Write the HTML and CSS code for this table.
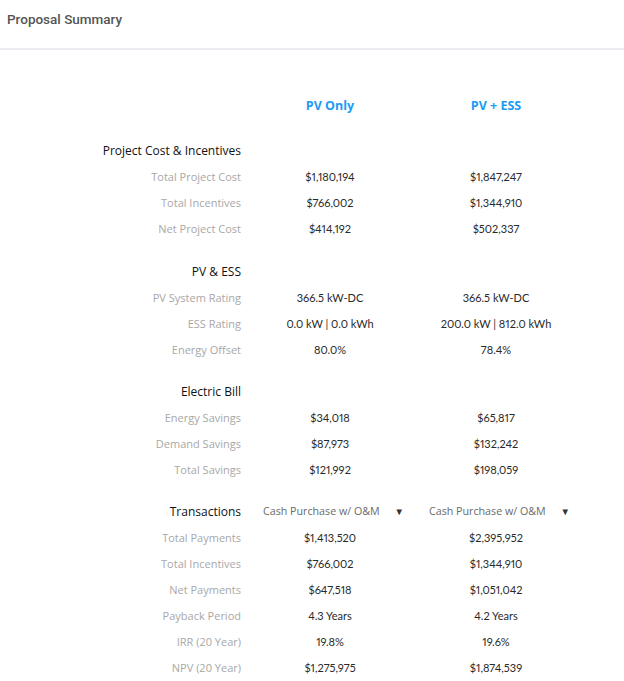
FILE: index.html
```html
<!DOCTYPE html>
<html>
<head>
<meta charset="utf-8">
<link rel="stylesheet" href="styles.css">
</head>
<body>
<header class="titlebar"><h1 class="title">Proposal Summary</h1></header>
<main class="summary">
  <div class="row heads">
    <div></div>
    <div class="col-head">PV Only</div>
    <div class="col-head">PV + ESS</div>
  </div>

  <section class="group">
    <div class="row"><div class="sec">Project Cost &amp; Incentives</div><div></div><div></div></div>
    <div class="row"><div class="lbl">Total Project Cost</div><div class="val">$1,180,194</div><div class="val">$1,847,247</div></div>
    <div class="row"><div class="lbl">Total Incentives</div><div class="val">$766,002</div><div class="val">$1,344,910</div></div>
    <div class="row"><div class="lbl">Net Project Cost</div><div class="val">$414,192</div><div class="val">$502,337</div></div>
  </section>

  <section class="group second">
    <div class="row"><div class="sec">PV &amp; ESS</div><div></div><div></div></div>
    <div class="row"><div class="lbl">PV System Rating</div><div class="val">366.5 kW-DC</div><div class="val">366.5 kW-DC</div></div>
    <div class="row"><div class="lbl">ESS Rating</div><div class="val">0.0 kW | 0.0 kWh</div><div class="val">200.0 kW | 812.0 kWh</div></div>
    <div class="row"><div class="lbl">Energy Offset</div><div class="val">80.0%</div><div class="val">78.4%</div></div>
  </section>

  <section class="group">
    <div class="row"><div class="sec">Electric Bill</div><div></div><div></div></div>
    <div class="row"><div class="lbl">Energy Savings</div><div class="val">$34,018</div><div class="val">$65,817</div></div>
    <div class="row"><div class="lbl">Demand Savings</div><div class="val">$87,973</div><div class="val">$132,242</div></div>
    <div class="row"><div class="lbl">Total Savings</div><div class="val">$121,992</div><div class="val">$198,059</div></div>
  </section>

  <section class="group">
    <div class="row">
      <div class="sec">Transactions</div>
      <div class="val"><div class="select"><span>Cash Purchase w/ O&amp;M</span><span class="caret">▼</span></div></div>
      <div class="val"><div class="select"><span>Cash Purchase w/ O&amp;M</span><span class="caret">▼</span></div></div>
    </div>
    <div class="row"><div class="lbl">Total Payments</div><div class="val">$1,413,520</div><div class="val">$2,395,952</div></div>
    <div class="row"><div class="lbl">Total Incentives</div><div class="val">$766,002</div><div class="val">$1,344,910</div></div>
    <div class="row"><div class="lbl">Net Payments</div><div class="val">$647,518</div><div class="val">$1,051,042</div></div>
    <div class="row"><div class="lbl">Payback Period</div><div class="val">4.3 Years</div><div class="val">4.2 Years</div></div>
    <div class="row"><div class="lbl">IRR (20 Year)</div><div class="val">19.8%</div><div class="val">19.6%</div></div>
    <div class="row"><div class="lbl">NPV (20 Year)</div><div class="val">$1,275,975</div><div class="val">$1,874,539</div></div>
  </section>
</main>
</body>
</html>
```
FILE: styles.css
```css
* { box-sizing: border-box; }
html, body { margin: 0; padding: 0; background: #ffffff; }
body { font-family: "Open Sans", "Liberation Sans", sans-serif; color: #333; }

.titlebar {
  height: 50px;
  border-bottom: 2px solid #ecebf2;
  padding: 10px 0 0 7px;
}
.title {
  margin: 0;
  font-family: Roboto, "Liberation Sans", sans-serif;
  font-size: 13.5px;
  font-weight: 500;
  color: #555;
  line-height: 18px;
}

.summary {
  padding-top: 42px;
  display: flex;
  flex-direction: column;
  gap: 16px;
}
.row {
  display: grid;
  grid-template-columns: 241px 154px 154px;
  column-gap: 12px;
  height: 26px;
  align-items: center;
}
.heads { margin-bottom: 3px; }
.col-head {
  text-align: center;
  color: #1b9bf4;
  font-weight: 700;
  font-size: 12.5px;
}
.group { display: flex; flex-direction: column; }
.second { margin-top: 1px; }
.sec {
  text-align: right;
  font-size: 12px;
  color: #111;
  white-space: nowrap;
}
.lbl {
  text-align: right;
  font-size: 11px;
  color: #a8a8a8;
  white-space: nowrap;
}
.val {
  text-align: center;
  font-family: Lato, "Open Sans", sans-serif;
  font-size: 11px;
  color: #2a2a2a;
  white-space: nowrap;
  font-variant-numeric: proportional-nums;
}
.select {
  display: flex;
  justify-content: space-between;
  align-items: center;
  width: 152px;
  margin: 0 auto;
  padding: 0 2px 0 9px;
  font-family: "Open Sans", sans-serif;
  color: #6a6a6a;
  font-size: 10.7px;
}
.caret { font-size: 9.5px; color: #333; }
```
